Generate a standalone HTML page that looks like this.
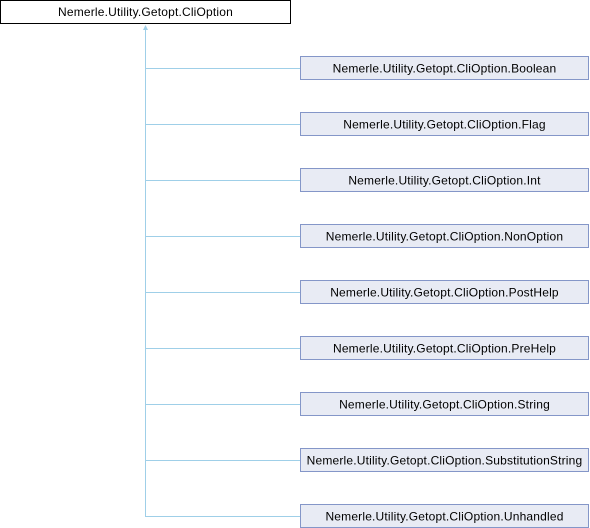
<!DOCTYPE html>
<html><head><style>
html,body{margin:0;padding:0;background:#fff;width:590px;height:528px;overflow:hidden}
svg text{font-family:"Liberation Sans",Arial,sans-serif;font-size:12px;fill:#000;letter-spacing:0.18px}
</style></head><body>
<svg width="590" height="528" viewBox="0 0 590 528" xmlns="http://www.w3.org/2000/svg">
<rect x="0.5" y="0.5" width="290" height="23" fill="#fff" stroke="#000"/>
<text x="145.5" y="16" text-anchor="middle">Nemerle.Utility.Getopt.CliOption</text>
<g stroke="#9fcfe8" fill="none">
<line x1="145.5" y1="28" x2="145.5" y2="516"/>
</g>
<polygon points="143,30 148,30 145.5,25" fill="#9fcfe8"/>
<g id="boxes">
<g stroke="#9fcfe8"><line x1="145" y1="68.5" x2="300" y2="68.5"/><line x1="145" y1="124.5" x2="300" y2="124.5"/><line x1="145" y1="180.5" x2="300" y2="180.5"/><line x1="145" y1="236.5" x2="300" y2="236.5"/><line x1="145" y1="292.5" x2="300" y2="292.5"/><line x1="145" y1="348.5" x2="300" y2="348.5"/><line x1="145" y1="404.5" x2="300" y2="404.5"/><line x1="145" y1="460.5" x2="300" y2="460.5"/><line x1="145" y1="516.5" x2="300" y2="516.5"/></g>
<g fill="#e8ebf4" stroke="#8496c8">
<rect x="300.5" y="56.5" width="288" height="23"/><rect x="300.5" y="112.5" width="288" height="23"/><rect x="300.5" y="168.5" width="288" height="23"/><rect x="300.5" y="224.5" width="288" height="23"/><rect x="300.5" y="280.5" width="288" height="23"/><rect x="300.5" y="336.5" width="288" height="23"/><rect x="300.5" y="392.5" width="288" height="23"/><rect x="300.5" y="448.5" width="288" height="23"/><rect x="300.5" y="504.5" width="288" height="23"/>
</g>
<g text-anchor="middle">
<text x="444.5" y="72.5">Nemerle.Utility.Getopt.CliOption.Boolean</text>
<text x="444.5" y="128.5">Nemerle.Utility.Getopt.CliOption.Flag</text>
<text x="444.5" y="184.5">Nemerle.Utility.Getopt.CliOption.Int</text>
<text x="444.5" y="240.5">Nemerle.Utility.Getopt.CliOption.NonOption</text>
<text x="444.5" y="296.5">Nemerle.Utility.Getopt.CliOption.PostHelp</text>
<text x="444.5" y="352.5">Nemerle.Utility.Getopt.CliOption.PreHelp</text>
<text x="444.5" y="408.5">Nemerle.Utility.Getopt.CliOption.String</text>
<text x="444.5" y="464.5">Nemerle.Utility.Getopt.CliOption.SubstitutionString</text>
<text x="444.5" y="520.5">Nemerle.Utility.Getopt.CliOption.Unhandled</text>
</g>
</g>
</svg>
</body></html>
